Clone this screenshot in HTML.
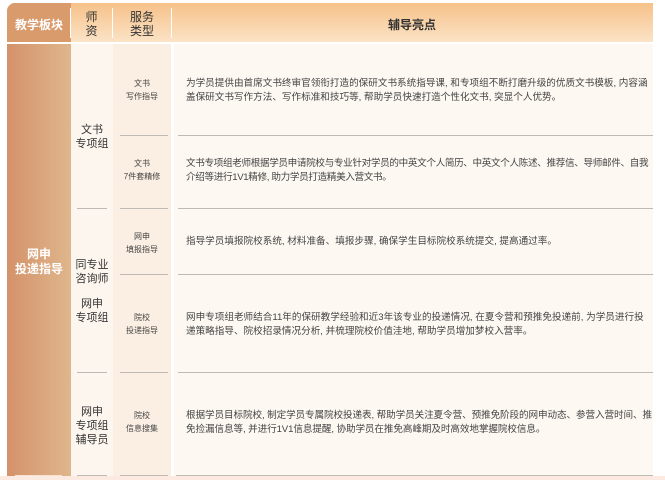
<!DOCTYPE html>
<html><head><meta charset="utf-8"><style>
*{margin:0;padding:0;box-sizing:border-box}
body{width:665px;height:480px;background:#fff;font-family:"Liberation Sans","Noto Sans CJK SC",sans-serif;position:relative;overflow:hidden}
.a{position:absolute}
.hd{top:3px;height:39px;background:linear-gradient(#f6c189,#fbe3c6);}
.c{text-align:center;color:#333}
.ln{position:absolute;height:1px;background:#bdb9b5}
.t{position:absolute;left:186px;font-size:9.6px;line-height:14px;color:#444;white-space:nowrap}
.s{font-size:8px;line-height:13px;color:#444}
.m{font-size:11px;line-height:14px;color:#333}
</style></head><body>
<div class="a hd" style="left:7px;width:646px;border-radius:8px 0 0 0"></div>
<div class="a" style="left:7px;top:3px;width:64px;height:39px;background:#d99a6c;border-radius:8px 0 0 0"></div>
<div class="a c" style="left:7px;top:16px;width:64px;color:#fff;font-size:12px;font-weight:bold">教学板块</div>
<div class="a" style="left:70px;top:8px;width:1px;height:30px;background:#fff"></div>
<div class="a" style="left:112px;top:8px;width:1px;height:30px;background:#fff"></div>
<div class="a" style="left:171px;top:8px;width:1px;height:30px;background:#fff"></div>
<div class="a c" style="left:71px;top:10px;width:41px;font-size:12px;line-height:14px">师<br>资</div>
<div class="a c" style="left:113px;top:10px;width:58px;font-size:12px;line-height:14px">服务<br>类型</div>
<div class="a c" style="left:172px;top:16px;width:480px;font-size:12px;font-weight:bold">辅导亮点</div>

<div class="a" style="left:7px;top:44px;width:64px;height:436px;background:linear-gradient(90deg,#d4926a,#dfb68c)"></div>
<div class="a" style="left:71px;top:44px;width:42px;height:436px;background:#fdf6ee"></div>
<div class="a" style="left:113px;top:44px;width:58px;height:436px;background:#fbefe3"></div>
<div class="a" style="left:174px;top:44px;width:479px;height:436px;background:#fdf8f2"></div>
<div class="a" style="left:0;top:476px;width:665px;height:4px;background:#fce9df"></div>

<div class="a c" style="left:7px;top:247px;width:64px;color:#fff;font-size:12px;font-weight:bold;line-height:15px">网申<br>投递指导</div>
<div class="a c m" style="left:71px;top:123px;width:42px">文书<br>专项组</div>
<div class="a c m" style="left:71px;top:258px;width:42px">同专业<br>咨询师</div>
<div class="a c m" style="left:71px;top:297px;width:42px">网申<br>专项组</div>
<div class="a c m" style="left:71px;top:405px;width:42px">网申<br>专项组<br>辅导员</div>

<div class="a c s" style="left:113px;top:77px;width:58px">文书<br>写作指导</div>
<div class="a c s" style="left:113px;top:157px;width:58px">文书<br>7件套精修</div>
<div class="a c s" style="left:113px;top:230px;width:58px">网申<br>填报指导</div>
<div class="a c s" style="left:113px;top:311px;width:58px">院校<br>投递指导</div>
<div class="a c s" style="left:113px;top:409px;width:58px">院校<br>信息搜集</div>

<div class="t" style="top:77px">为学员提供由首席文书终审官领衔打造的保研文书系统指导课, 和专项组不断打磨升级的优质文书模板, 内容涵<br>盖保研文书写作方法、写作标准和技巧等, 帮助学员快速打造个性化文书, 突显个人优势。</div>
<div class="t" style="top:157px;letter-spacing:-0.35px">文书专项组老师根据学员申请院校与专业针对学员的中英文个人简历、中英文个人陈述、推荐信、导师邮件、自我<br>介绍等进行1V1精修, 助力学员打造精美入营文书。</div>
<div class="t" style="top:235px">指导学员填报院校系统, 材料准备、填报步骤, 确保学生目标院校系统提交, 提高通过率。</div>
<div class="t" style="top:311px">网申专项组老师结合11年的保研教学经验和近3年该专业的投递情况, 在夏令营和预推免投递前, 为学员进行投<br>递策略指导、院校招录情况分析, 并梳理院校价值洼地, 帮助学员增加梦校入营率。</div>
<div class="t" style="top:409px;letter-spacing:-0.1px">根据学员目标院校, 制定学员专属院校投递表, 帮助学员关注夏令营、预推免阶段的网申动态、参营入营时间、推<br>免捡漏信息等, 并进行1V1信息提醒, 协助学员在推免高峰期及时高效地掌握院校信息。</div>

<div class="ln" style="left:120px;top:135px;width:48px"></div>
<div class="ln" style="left:178px;top:135px;width:475px"></div>
<div class="ln" style="left:77px;top:208px;width:30px"></div>
<div class="ln" style="left:120px;top:208px;width:48px"></div>
<div class="ln" style="left:178px;top:208px;width:475px"></div>
<div class="ln" style="left:120px;top:274px;width:48px"></div>
<div class="ln" style="left:178px;top:274px;width:475px"></div>
<div class="ln" style="left:77px;top:372px;width:30px"></div>
<div class="ln" style="left:120px;top:372px;width:48px"></div>
<div class="ln" style="left:178px;top:372px;width:475px"></div>
<div class="ln" style="left:15px;top:475px;width:47px;background:#f6e2d2"></div>
<div class="ln" style="left:77px;top:475px;width:30px"></div>
<div class="ln" style="left:120px;top:475px;width:48px"></div>
<div class="ln" style="left:176px;top:475px;width:477px"></div>
</body></html>
